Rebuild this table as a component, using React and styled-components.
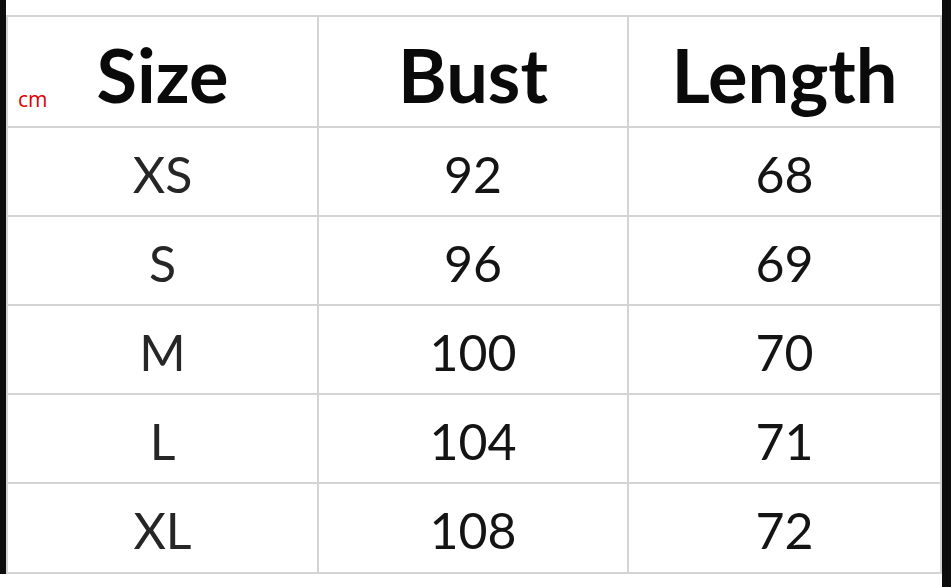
import React from "react";
import styled, { createGlobalStyle } from "styled-components";

const GlobalStyle = createGlobalStyle`
  html, body {
    margin: 0;
    padding: 0;
    background: #ffffff;
  }
`;

const Page = styled.div`
  display: flex;
  align-items: flex-start;
  width: 951px;
  height: 587px;
  overflow: hidden;
  background: #ffffff;
`;

const SideBar = styled.div`
  flex: none;
  width: ${(p) => p.$width}px;
  height: ${(p) => p.$height}px;
  background: #0d0d0d;
`;

const Main = styled.div`
  flex: 1;
  padding-top: 15px;
`;

const Table = styled.div`
  display: grid;
  grid-template-columns: 309px 308px 311px;
  grid-template-rows: 109px repeat(4, 87px) 88px;
  gap: 2px;
  padding: 2px;
  background: #d4d4d4;
`;

const HeadCell = styled.div`
  position: relative;
  display: flex;
  align-items: center;
  justify-content: center;
  background: #ffffff;
  font-family: Lato, "Liberation Sans", sans-serif;
  font-weight: 700;
  font-size: 74px;
  color: #0a0a0a;
  padding-top: 6px;
  box-sizing: border-box;
`;

const Cell = styled.div`
  display: flex;
  align-items: center;
  justify-content: center;
  background: #ffffff;
  font-family: Lato, "Liberation Sans", sans-serif;
  font-weight: 400;
  font-size: 50px;
  color: ${(p) => (p.$label ? "#262626" : "#141414")};
  padding-top: 4px;
  box-sizing: border-box;
`;

const Unit = styled.span`
  position: absolute;
  left: 10px;
  top: 68px;
  font-family: "Open Sans", sans-serif;
  font-weight: 400;
  font-size: 21px;
  color: #e00000;
`;

const rows = [
  ["XS", "92", "68"],
  ["S", "96", "69"],
  ["M", "100", "70"],
  ["L", "104", "71"],
  ["XL", "108", "72"],
];

const App = () => {
  return (
    <>
      <GlobalStyle />
      <Page>
        <SideBar $width={6} $height={574} />
        <Main>
          <Table>
            <HeadCell>
              <Unit>cm</Unit>
              Size
            </HeadCell>
            <HeadCell>Bust</HeadCell>
            <HeadCell>Length</HeadCell>
            {rows.map((row) =>
              row.map((value, i) => (
                <Cell key={row[0] + i} $label={i === 0}>
                  {value}
                </Cell>
              ))
            )}
          </Table>
        </Main>
        <SideBar $width={9} $height={587} />
      </Page>
    </>
  );
};

export default App;
